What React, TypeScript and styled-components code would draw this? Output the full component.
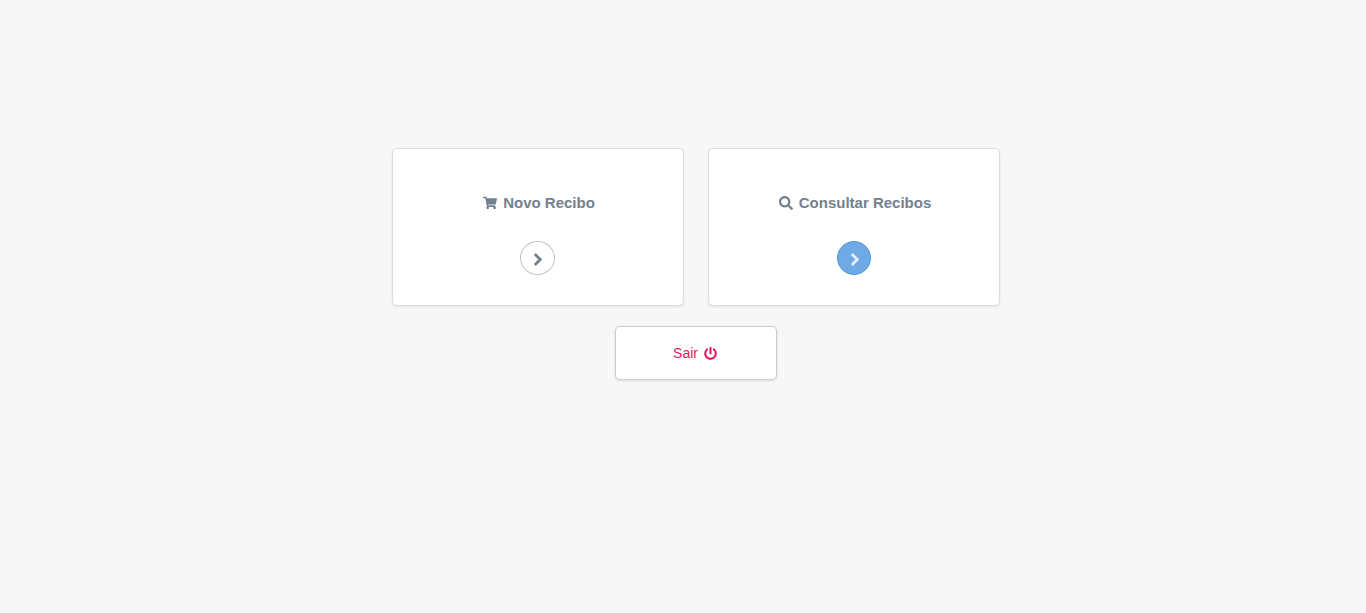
import { createGlobalStyle, styled } from 'styled-components';
import { FaPowerOff, FaSearch, FaShoppingCart } from 'react-icons/fa';

const GlobalStyle = createGlobalStyle`
  html, body {
    margin: 0;
    height: 100%;
    background: #f7f7f7;
    font-family: "Liberation Sans", Arial, sans-serif;
  }
`;

const Page = styled.main`
  box-sizing: border-box;
  min-height: 613px;
  padding: 148px 0 0 26px;
  display: flex;
  flex-direction: column;
  align-items: center;
  gap: 20px;
`;
const CardRow = styled.div`
  display: flex;
  gap: 24px;
`;
const Card = styled.section`
  box-sizing: border-box;
  width: 292px;
  height: 158px;
  padding-top: 45px;
  background: #fff;
  border: 1px solid #ddd;
  border-radius: 5px;
  box-shadow: 0 1px 3px rgba(0, 0, 0, 0.08);
  display: flex;
  flex-direction: column;
  align-items: center;
`;
const CardTitle = styled.h2`
  margin: 0;
  padding-left: 2px;
  height: 18px;
  display: flex;
  align-items: center;
  gap: 6px;
  font-size: 15px;
  line-height: 18px;
  font-weight: 700;
  color: #71818e;
`;
const GoButton = styled.button<{ $active?: boolean }>`
  box-sizing: border-box;
  width: ${p => (p.$active ? '34px' : '35px')};
  height: 34px;
  margin: 29px ${p => (p.$active ? '0' : '1px')} 0 0;
  padding: 2px 0 0 1px;
  border-radius: 50%;
  border: 1px solid ${p => (p.$active ? '#4a9bd1' : '#c4c4c4')};
  background: ${p => (p.$active ? '#70a9e6' : '#fff')};
  color: ${p => (p.$active ? '#e8eef6' : '#71818e')};
  display: flex;
  align-items: center;
  justify-content: center;
`;
const ExitButton = styled.button`
  box-sizing: border-box;
  width: 162px;
  height: 54px;
  padding: 0 2px 0 0;
  background: #fff;
  border: 1px solid #ccc;
  border-radius: 5px;
  box-shadow: 0 1px 3px rgba(0, 0, 0, 0.12);
  color: #e8175d;
  font-family: inherit;
  font-size: 14px;
  display: flex;
  align-items: center;
  justify-content: center;
  gap: 6px;
`;

const Chevron = () => (
  <svg width="10" height="13" viewBox="0 0 10 13" fill="none" stroke="currentColor" strokeWidth="2.8">
    <path d="M1.8 1 L7.3 6.5 L1.8 12" />
  </svg>
);

export default function App() {
  return (
    <>
      <GlobalStyle />
      <Page>
        <CardRow>
          <Card>
            <CardTitle><FaShoppingCart size={14} /> Novo Recibo</CardTitle>
            <GoButton><Chevron /></GoButton>
          </Card>
          <Card>
            <CardTitle><FaSearch size={14} /> Consultar Recibos</CardTitle>
            <GoButton $active><Chevron /></GoButton>
          </Card>
        </CardRow>
        <ExitButton>Sair <FaPowerOff size={13} /></ExitButton>
      </Page>
    </>
  );
}
